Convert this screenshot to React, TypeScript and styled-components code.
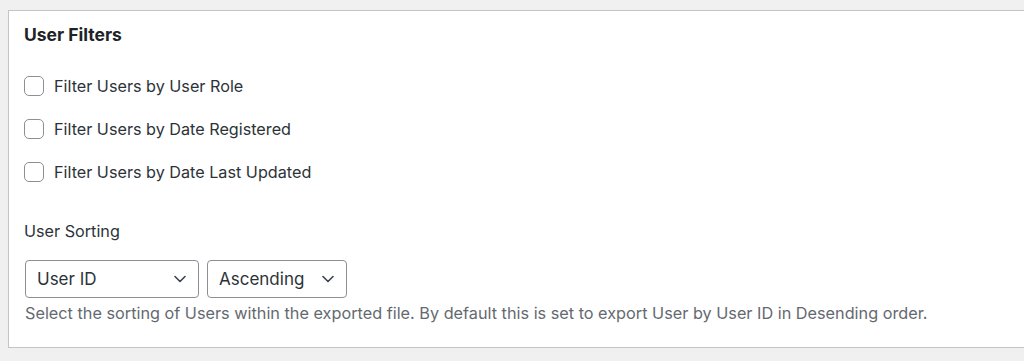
import React from "react";
import styled, { createGlobalStyle } from "styled-components";

const Global = createGlobalStyle`
  html, body { margin: 0; padding: 0; background: #f0f0f1; overflow: hidden; }
  body { font-family: Inter, "Liberation Sans", Arial, sans-serif; color: #1d2327; }
  #root { padding: 10px 0 0 8px; }
`;

const Panel = styled.section`
  width: 1040px;
  box-sizing: border-box;
  background: #fff;
  border: 1px solid #c3c4c7;
  box-shadow: 0 1px 1px rgba(0, 0, 0, 0.04);
  padding: 14px 15px 24px 15px;
`;

const Title = styled.h2`
  margin: 0 0 30px 0;
  font-size: 17.5px;
  line-height: 20px;
  font-weight: 700;
  color: #1d2327;
`;

const CheckList = styled.div`
  display: flex;
  flex-direction: column;
  gap: 21px;
  margin-bottom: 38px;
`;

const CheckRow = styled.label`
  display: flex;
  align-items: center;
  gap: 10px;
  font-size: 16.2px;
  line-height: 22px;
  color: #2c3338;
`;

const Box = styled.span`
  width: 20px;
  height: 20px;
  border: 1.5px solid #8c8f94;
  border-radius: 5px;
  background: #fff;
  box-sizing: border-box;
  flex: none;
`;

const SectionLabel = styled.div`
  font-size: 16.2px;
  line-height: 20px;
  color: #2c3338;
  margin-bottom: 19px;
`;

const SelectRow = styled.div`
  display: flex;
  gap: 8px;
  margin-left: 1px;
`;

const Select = styled.div<{ $w: number }>`
  width: ${(p) => p.$w}px;
  height: 38px;
  box-sizing: border-box;
  border: 1px solid #8c8f94;
  border-radius: 4px;
  display: flex;
  align-items: center;
  justify-content: space-between;
  padding: 0 12px 0 11px;
  font-size: 17px;
  color: #2c3338;
`;

const Help = styled.p`
  margin: 5px 0 0 1px;
  font-size: 16.25px;
  line-height: 20px;
  color: #646970;
`;

const Chevron = () => (
  <svg width="12" height="8" viewBox="0 0 12 8" fill="none">
    <path d="M1 1.5 L6 6.5 L11 1.5" stroke="#3c434a" strokeWidth="1.6" strokeLinecap="round" strokeLinejoin="round" />
  </svg>
);

const filters = [
  "Filter Users by User Role",
  "Filter Users by Date Registered",
  "Filter Users by Date Last Updated",
];

export default function App() {
  return (
    <>
      <Global />
      <Panel>
        <Title>User Filters</Title>
        <CheckList>
          {filters.map((f) => (
            <CheckRow key={f}>
              <Box />
              {f}
            </CheckRow>
          ))}
        </CheckList>
        <SectionLabel>User Sorting</SectionLabel>
        <SelectRow>
          <Select $w={174}>
            User ID
            <Chevron />
          </Select>
          <Select $w={140}>
            Ascending
            <Chevron />
          </Select>
        </SelectRow>
        <Help>
          Select the sorting of Users within the exported file. By default this is set to export User by User ID in Desending order.
        </Help>
      </Panel>
    </>
  );
}
